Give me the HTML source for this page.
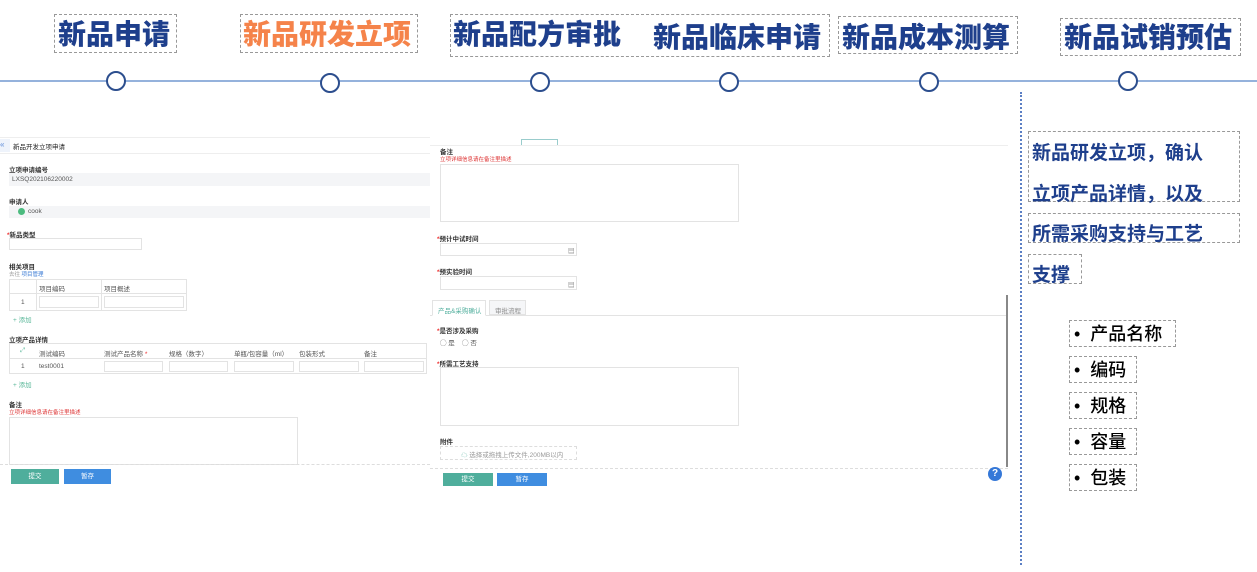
<!DOCTYPE html>
<html><head><meta charset="utf-8"><style>
*{box-sizing:border-box;margin:0;padding:0}
body{width:1257px;height:572px;background:#fff;position:relative;overflow:hidden;font-family:"Liberation Sans","Noto Sans CJK SC",sans-serif}
.a{position:absolute}
.t{font-weight:900;font-size:28px;color:#1e3f8c;white-space:nowrap;line-height:1}
.db{border:1px dashed #999}
.c{position:absolute;width:20px;height:20px;border:2px solid #2c4e8e;border-radius:50%;background:#fff}
.s{font-size:6.5px;color:#333;white-space:nowrap;font-weight:bold}
.n{font-size:6.5px;color:#555;white-space:nowrap}
.in{position:absolute;border:1px solid #e3e3e3;background:#fff}
.bl{font-size:19px;font-weight:bold;color:#1e3f8c;white-space:nowrap}
.li{position:absolute;border:1px dashed #999;font-size:18px;color:#000;height:27px;line-height:26px;padding-left:4px;white-space:nowrap;font-weight:500}
.r{color:#e33}
</style></head><body>
<div class="a" style="left:0;top:80px;width:1257px;height:2px;background:#95b2dc"></div>
<div class="c" style="left:106px;top:71px"></div>
<div class="c" style="left:320px;top:73px"></div>
<div class="c" style="left:530px;top:72px"></div>
<div class="c" style="left:719px;top:72px"></div>
<div class="c" style="left:919px;top:72px"></div>
<div class="c" style="left:1118px;top:71px"></div>

<div class="a db" style="left:54px;top:14px;width:123px;height:39px"></div>
<div class="a t" style="left:58px;top:21px">新品申请</div>
<div class="a db" style="left:240px;top:14px;width:178px;height:39px"></div>
<div class="a t" style="left:243px;top:21px;color:#f5834a">新品研发立项</div>
<div class="a db" style="left:450px;top:14px;width:380px;height:43px"></div>
<div class="a t" style="left:453px;top:21px">新品配方审批</div>
<div class="a t" style="left:653px;top:24px">新品临床申请</div>
<div class="a db" style="left:838px;top:16px;width:180px;height:38px"></div>
<div class="a t" style="left:842px;top:24px">新品成本测算</div>
<div class="a db" style="left:1060px;top:18px;width:181px;height:38px"></div>
<div class="a t" style="left:1064px;top:24px">新品试销预估</div>

<div class="a" style="left:1020px;top:92px;width:0;height:473px;border-left:2px dotted #5b7fc4"></div>

<div class="a db" style="left:1028px;top:131px;width:212px;height:71px"></div>
<div class="a db" style="left:1028px;top:213px;width:212px;height:30px"></div>
<div class="a db" style="left:1028px;top:254px;width:54px;height:30px"></div>
<div class="a bl" style="left:1032px;top:138px">新品研发立项，确认</div>
<div class="a bl" style="left:1032px;top:179px">立项产品详情，以及</div>
<div class="a bl" style="left:1032px;top:219px">所需采购支持与工艺</div>
<div class="a bl" style="left:1032px;top:260px">支撑</div>
<div class="li" style="left:1069px;top:320px;width:107px">•&nbsp; 产品名称</div>
<div class="li" style="left:1069px;top:356px;width:68px">•&nbsp; 编码</div>
<div class="li" style="left:1069px;top:392px;width:68px">•&nbsp; 规格</div>
<div class="li" style="left:1069px;top:428px;width:68px">•&nbsp; 容量</div>
<div class="li" style="left:1069px;top:464px;width:68px">•&nbsp; 包装</div>

<!-- left form -->
<div class="a" style="left:0;top:137px;width:430px;height:1px;background:#eee"></div>
<div class="a" style="left:0;top:153px;width:430px;height:1px;background:#eee"></div>
<div class="a" style="left:0;top:139px;width:10px;height:13px;background:#eef3fb;color:#5b8ad8;font-size:8px;line-height:12px">«</div>
<div class="a s" style="left:13px;top:141px;font-weight:normal;color:#222">新品开发立项申请</div>
<div class="a s" style="left:9px;top:164px">立项申请编号</div>
<div class="a" style="left:9px;top:173px;width:421px;height:13px;background:#f4f5f7"></div>
<div class="a n" style="left:12px;top:176px">LXSQ202106220002</div>
<div class="a s" style="left:9px;top:196px">申请人</div>
<div class="a" style="left:9px;top:206px;width:421px;height:12px;background:#f4f5f7"></div>
<div class="a" style="left:18px;top:208px;width:7px;height:7px;border-radius:50%;background:#4cbb7f"></div>
<div class="a n" style="left:28px;top:208px">cook</div>
<div class="a s" style="left:7px;top:229px"><span class="r">*</span>新品类型</div>
<div class="in" style="left:9px;top:238px;width:133px;height:12px"></div>
<div class="a s" style="left:9px;top:261px">相关项目</div>
<div class="a n" style="left:9px;top:270px;font-size:5.5px;color:#999">去往 <span style="color:#3a7bd5">项目管理</span></div>
<div class="in" style="left:9px;top:279px;width:178px;height:32px"></div>
<div class="a" style="left:9px;top:293px;width:178px;height:1px;background:#e3e3e3"></div>
<div class="a" style="left:36px;top:279px;width:1px;height:32px;background:#e3e3e3"></div>
<div class="a" style="left:101px;top:279px;width:1px;height:32px;background:#e3e3e3"></div>
<div class="a n" style="left:39px;top:283px">项目编码</div>
<div class="a n" style="left:104px;top:283px">项目概述</div>
<div class="a n" style="left:21px;top:299px">1</div>
<div class="in" style="left:39px;top:296px;width:60px;height:12px"></div>
<div class="in" style="left:104px;top:296px;width:80px;height:12px"></div>
<div class="a n" style="left:13px;top:314px;color:#5bb89a">+ 添加</div>
<div class="a s" style="left:9px;top:334px">立项产品详情</div>
<div class="in" style="left:9px;top:343px;width:418px;height:31px"></div>
<div class="a" style="left:9px;top:358px;width:418px;height:1px;background:#e3e3e3"></div>
<div class="a n" style="left:20px;top:347px;color:#5bb89a">⤢</div>
<div class="a n" style="left:39px;top:348px">测试编码</div>
<div class="a n" style="left:104px;top:348px">测试产品名称 <span class="r">*</span></div>
<div class="a n" style="left:169px;top:348px">规格（数字）</div>
<div class="a n" style="left:234px;top:348px">单瓶/包容量（ml）</div>
<div class="a n" style="left:299px;top:348px">包装形式</div>
<div class="a n" style="left:364px;top:348px">备注</div>
<div class="a n" style="left:21px;top:363px">1</div>
<div class="a n" style="left:39px;top:363px">test0001</div>
<div class="in" style="left:104px;top:361px;width:59px;height:11px"></div>
<div class="in" style="left:169px;top:361px;width:59px;height:11px"></div>
<div class="in" style="left:234px;top:361px;width:60px;height:11px"></div>
<div class="in" style="left:299px;top:361px;width:60px;height:11px"></div>
<div class="in" style="left:364px;top:361px;width:60px;height:11px"></div>
<div class="a n" style="left:13px;top:379px;color:#5bb89a">+ 添加</div>
<div class="a s" style="left:9px;top:399px">备注</div>
<div class="a n" style="left:9px;top:408px;font-size:5.5px;color:#d33">立项详细信息请在备注里描述</div>
<div class="in" style="left:9px;top:417px;width:289px;height:48px"></div>
<div class="a" style="left:0;top:464px;width:430px;height:1px;border-top:1px dashed #ddd"></div>
<div class="a" style="left:11px;top:469px;width:48px;height:15px;background:#4fae9c;color:#fff;font-size:6.5px;text-align:center;line-height:15px">提交</div>
<div class="a" style="left:64px;top:469px;width:47px;height:15px;background:#3f8de0;color:#fff;font-size:6.5px;text-align:center;line-height:15px">暂存</div>

<!-- right form -->
<div class="a" style="left:430px;top:145px;width:578px;height:1px;background:#eee"></div>
<div class="a" style="left:521px;top:139px;width:37px;height:6px;border:1px solid #9cc;border-bottom:none"></div>
<div class="a s" style="left:440px;top:146px">备注</div>
<div class="a n" style="left:440px;top:155px;font-size:5.5px;color:#d33">立项详细信息请在备注里描述</div>
<div class="in" style="left:440px;top:164px;width:299px;height:58px"></div>
<div class="a s" style="left:437px;top:233px"><span class="r">*</span>预计中试时间</div>
<div class="in" style="left:440px;top:243px;width:137px;height:13px"></div>
<div class="a n" style="left:568px;top:245px">▤</div>
<div class="a s" style="left:437px;top:266px"><span class="r">*</span>预实验时间</div>
<div class="in" style="left:440px;top:276px;width:137px;height:14px"></div>
<div class="a n" style="left:568px;top:279px">▤</div>
<div class="a" style="left:430px;top:315px;width:578px;height:1px;background:#e3e3e3"></div>
<div class="a" style="left:432px;top:300px;width:54px;height:16px;border:1px solid #e3e3e3;border-bottom:1px solid #fff;background:#fff"></div>
<div class="a n" style="left:438px;top:305px;color:#4fae9c">产品&amp;采购确认</div>
<div class="a" style="left:489px;top:300px;width:37px;height:15px;border:1px solid #e3e3e3;background:#f5f6f8"></div>
<div class="a n" style="left:495px;top:305px;color:#888">审批流程</div>
<div class="a s" style="left:437px;top:325px"><span class="r">*</span>是否涉及采购</div>
<div class="a n" style="left:440px;top:337px">◯ 是 &nbsp;&nbsp; ◯ 否</div>
<div class="a s" style="left:437px;top:358px"><span class="r">*</span>所需工艺支持</div>
<div class="in" style="left:440px;top:367px;width:299px;height:59px"></div>
<div class="a s" style="left:440px;top:436px">附件</div>
<div class="a" style="left:440px;top:446px;width:137px;height:14px;border:1px dashed #ddd"></div>
<div class="a n" style="left:461px;top:449px;color:#999"><span style="color:#4fae9c">☁</span> 选择或拖拽上传文件,200MB以内</div>
<div class="a" style="left:1006px;top:295px;width:2px;height:172px;background:#888"></div>
<div class="a" style="left:430px;top:468px;width:578px;height:1px;border-top:1px dashed #ddd"></div>
<div class="a" style="left:443px;top:473px;width:50px;height:13px;background:#4fae9c;color:#fff;font-size:6.5px;text-align:center;line-height:13px">提交</div>
<div class="a" style="left:497px;top:473px;width:50px;height:13px;background:#3f8de0;color:#fff;font-size:6.5px;text-align:center;line-height:13px">暂存</div>
<div class="a" style="left:988px;top:467px;width:14px;height:14px;border-radius:50%;background:#3578d8;color:#fff;font-size:10px;font-weight:bold;text-align:center;line-height:14px">?</div>
</body></html>
